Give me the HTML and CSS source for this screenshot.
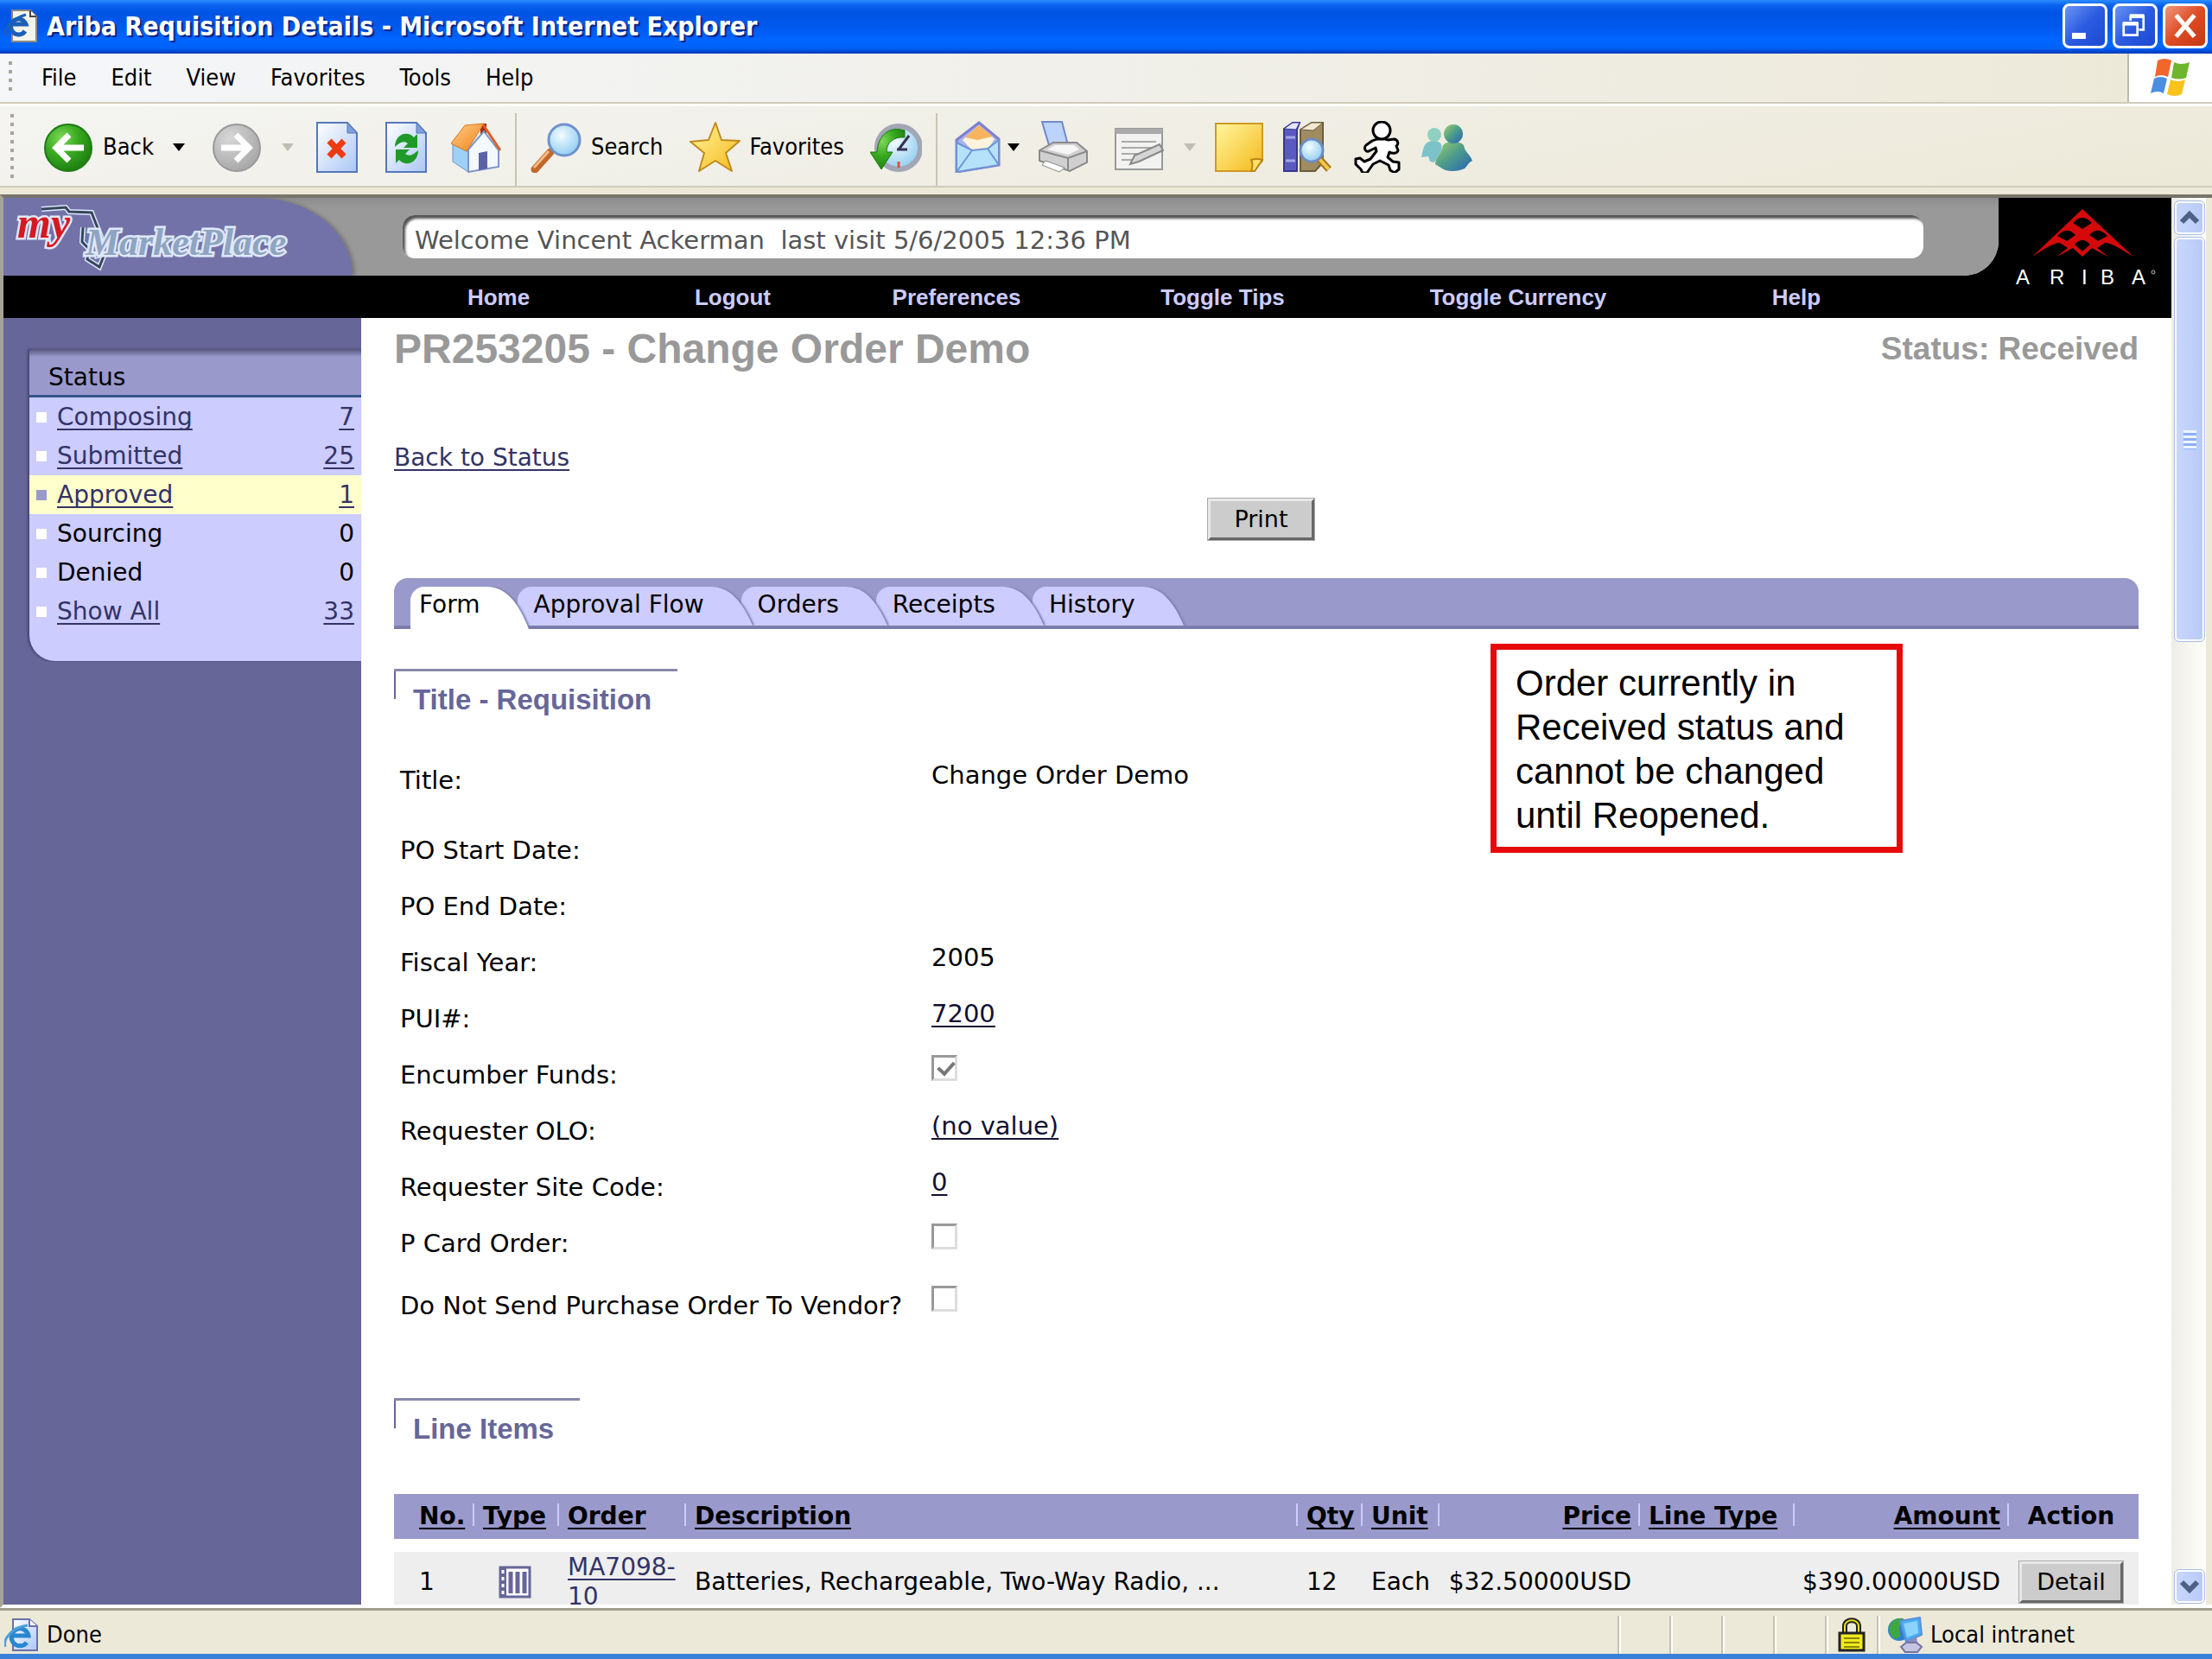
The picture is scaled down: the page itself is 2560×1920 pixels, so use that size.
FILE: index.html
```html
<!DOCTYPE html>
<html lang="en">

<head>
    <meta charset="UTF-8">
    <meta name="viewport" content="width=device-width, initial-scale=1.0">
    <title>Ariba Requisition Details</title>
    <link rel="stylesheet" href="styles.css">
</head>

<body>
    <!-- shared gradients for the icons -->
    <svg class="defs" width="0" height="0" aria-hidden="true">
        <defs>
            <radialGradient id="green" cx="35%" cy="30%" r="75%">
                <stop offset="0" stop-color="#7ed957"/>
                <stop offset="0.5" stop-color="#37a81f"/>
                <stop offset="1" stop-color="#1c7d10"/>
            </radialGradient>
            <radialGradient id="grey" cx="35%" cy="30%" r="75%">
                <stop offset="0" stop-color="#d8d8d8"/>
                <stop offset="1" stop-color="#a6a6a6"/>
            </radialGradient>
            <linearGradient id="paper" x1="0" y1="0" x2="1" y2="1">
                <stop offset="0" stop-color="#ffffff"/>
                <stop offset="1" stop-color="#aac6f5"/>
            </linearGradient>
            <linearGradient id="gold" x1="0" y1="0" x2="1" y2="1">
                <stop offset="0" stop-color="#fff7a0"/>
                <stop offset="1" stop-color="#f5b81a"/>
            </linearGradient>
            <linearGradient id="orange" x1="0" y1="0" x2="1" y2="1">
                <stop offset="0" stop-color="#ffcf8a"/>
                <stop offset="1" stop-color="#f08018"/>
            </linearGradient>
            <radialGradient id="glass" cx="40%" cy="35%" r="70%">
                <stop offset="0" stop-color="#f2fcff"/>
                <stop offset="1" stop-color="#8ecbf0"/>
            </radialGradient>
            <linearGradient id="buddy" x1="0" y1="0" x2="1" y2="1">
                <stop offset="0" stop-color="#9ed06a"/>
                <stop offset="0.5" stop-color="#4a9a8c"/>
                <stop offset="1" stop-color="#2a62b8"/>
            </linearGradient>
        </defs>
    </svg>

    <div class="window">
        <header class="titlebar">
            <svg class="title-icon" viewBox="0 0 40 40">
                <path d="M10 2h21l7 7v29H10z" fill="#f4f4ea" stroke="#8a8a80" stroke-width="2"/>
                <path d="M31 2v7h7" fill="#fff" stroke="#444" stroke-width="2"/>
                <path d="M25 26a9 9 0 1 1 1-8H8" fill="none" stroke="#1c5fb8" stroke-width="5"/>
                <path d="M2 31C0 22 12 11 26 7" fill="none" stroke="#1c5fb8" stroke-width="3"/>
            </svg>
            <h1 class="window-title">Ariba Requisition Details - Microsoft Internet Explorer</h1>
            <div class="window-buttons">
                <button class="win-btn" aria-label="Minimize">
                    <svg viewBox="0 0 52 52"><path d="M9 35h18v8H9z" fill="#fff"/></svg>
                </button>
                <button class="win-btn" aria-label="Restore">
                    <svg viewBox="0 0 52 52" fill="none" stroke="#fff" stroke-width="3">
                        <path d="M20 19v-5h17v17h-6"/><path d="M19 13h19" stroke-width="5"/>
                        <path d="M11 23h18v15H11z"/><path d="M10 23h20" stroke-width="5"/>
                    </svg>
                </button>
                <button class="win-btn close" aria-label="Close">
                    <svg viewBox="0 0 52 52"><path d="M14 12l24 28M38 12L14 40" stroke="#fff" stroke-width="6"/></svg>
                </button>
            </div>
        </header>

        <nav class="menubar">
            <span class="grip"></span>
            <button>File</button>
            <button>Edit</button>
            <button>View</button>
            <button>Favorites</button>
            <button>Tools</button>
            <button>Help</button>
            <div class="throbber">
                <svg viewBox="0 0 50 46">
                    <path d="M10 3q8-4 16 0l-4 19q-8-4-15 0z" fill="#f0662c"/>
                    <path d="M29 5q8 4 18 0l-4 18q-8 3-17 0z" fill="#6cb52d"/>
                    <path d="M6 24q7-4 15 0l-4 17q-7-4-15 0z" fill="#4a8fe0"/>
                    <path d="M25 25q8 4 17 0l-4 17q-8 4-17 0z" fill="#fbc21c"/>
                </svg>
            </div>
        </nav>

        <div class="toolbar">
            <span class="grip"></span>
            <button class="tool labelled">
                <svg viewBox="0 0 60 60">
                    <circle cx="30" cy="31" r="27" fill="url(#green)" stroke="#1f7a14" stroke-width="2"/>
                    <path d="M48 31H18M31 16L16 31l15 15" fill="none" stroke="#fff" stroke-width="7"/>
                </svg>
                Back
                <i class="arrow"></i>
            </button>
            <button class="tool" disabled aria-label="Forward">
                <svg viewBox="0 0 60 60">
                    <circle cx="30" cy="31" r="27" fill="url(#grey)" stroke="#999" stroke-width="2"/>
                    <path d="M12 31h30M29 16l15 15-15 15" fill="none" stroke="#fff" stroke-width="7"/>
                </svg>
                <i class="arrow"></i>
            </button>
            <button class="tool" aria-label="Stop">
                <svg viewBox="0 0 60 60">
                    <path d="M7 2h35l11 12v45H7z" fill="url(#paper)" stroke="#5577bb" stroke-width="2"/>
                    <path d="M42 2v12h11z" fill="#7e9fdc" stroke="#5577bb"/>
                    <path d="M21 23l17 18M38 23L21 41" stroke="#ee3a12" stroke-width="7"/>
                </svg>
            </button>
            <button class="tool" aria-label="Refresh">
                <svg viewBox="0 0 60 60">
                    <path d="M7 2h35l11 12v45H7z" fill="url(#paper)" stroke="#5577bb" stroke-width="2"/>
                    <path d="M42 2v12h11z" fill="#7e9fdc" stroke="#5577bb"/>
                    <path d="M17 30c0-14 14-20 22-11l4-4v16H27l5-5c-6-4-10 0-15 4z" fill="#1f9a28"/>
                    <path d="M44 34c0 14-14 20-22 11l-4 4V33h16l-5 5c6 4 10 0 15-4z" fill="#1f9a28"/>
                </svg>
            </button>
            <button class="tool" aria-label="Home">
                <svg viewBox="0 0 60 60">
                    <path d="M36 3h7v14h-7z" fill="#a32a14"/>
                    <path d="M4 27l18 9v23L4 47z" fill="#9fd0f5" stroke="#6d95c8"/>
                    <path d="M22 33L40 12l17 22v19L22 59z" fill="#f4f8ff" stroke="#7b96c8" stroke-width="2"/>
                    <path d="M34 37l10-2v20l-10 2z" fill="#5c62a8"/>
                    <path d="M2 26L18 5l22-2-20 32z" fill="url(#orange)" stroke="#d9791e"/>
                    <path d="M39 4l20 30" stroke="#d9612a" stroke-width="3"/>
                </svg>
            </button>
            <span class="separator"></span>
            <button class="tool labelled">
                <svg viewBox="0 0 60 60">
                    <path d="M5 56l18-20" stroke="#c0692a" stroke-width="9" stroke-linecap="round"/>
                    <path d="M4 54l17-19" stroke="#f5b988" stroke-width="3"/>
                    <circle cx="39" cy="22" r="18" fill="url(#glass)" stroke="#6f92cf" stroke-width="3"/>
                </svg>
                Search
            </button>
            <button class="tool labelled">
                <svg viewBox="0 0 60 60">
                    <path d="M31 2l7 20 21 1-16 14 7 21-19-12-19 12 6-21L2 24l21-2z" fill="url(#gold)" stroke="#c08a1c" stroke-width="2" stroke-linejoin="round"/>
                </svg>
                Favorites
            </button>
            <button class="tool" aria-label="History">
                <svg viewBox="0 0 60 60">
                    <circle cx="33" cy="31" r="25" fill="url(#glass)" stroke="#a3a6b4" stroke-width="6"/>
                    <path d="M33 33L45 17M31 33h12" stroke="#335" stroke-width="3"/>
                    <path d="M33 47v7" stroke="#e05030" stroke-width="3"/>
                    <path d="M40 11C22 5 9 17 8 36H0l13 20 13-20h-7c0-11 8-18 21-17z" fill="url(#green)" stroke="#1f7a14"/>
                </svg>
            </button>
            <span class="separator"></span>
            <button class="tool mail" aria-label="Mail">
                <svg viewBox="0 0 60 60">
                    <path d="M6 22L32 2l23 19v30L6 59z" fill="#a9b4ec" stroke="#7f7fd0" stroke-width="3"/>
                    <path d="M13 22L32 5l18 16-8 12-17 2z" fill="#fff3dd"/>
                    <path d="M16 19L32 5l16 13-18 4z" fill="#f6b45e"/>
                    <path d="M6 25l18 9 18-2 13-10v29L6 59z" fill="#b5e2fa" stroke="#6f93d8" stroke-width="2"/>
                    <path d="M6 59l18-25M55 51L42 32" stroke="#6f93d8" stroke-width="2"/>
                </svg>
                <i class="arrow"></i>
            </button>
            <button class="tool print" aria-label="Print page">
                <svg viewBox="0 0 60 60">
                    <path d="M6 1h23l7 27H14z" fill="#bcd3fb" stroke="#7288c8" stroke-width="2"/>
                    <path d="M3 34l16-9h27l12 10v13L38 58 3 46z" fill="#d0d0d0" stroke="#8a8a8a" stroke-width="2"/>
                    <path d="M3 34l33 9 22-8M36 43v14" fill="none" stroke="#8a8a8a" stroke-width="2"/>
                    <path d="M12 33l9-5h22l6 5-13 6z" fill="#f6f6f6"/>
                    <path d="M10 46l22 8-6 5-20-8z" fill="#fff" stroke="#888"/>
                </svg>
            </button>
            <button class="tool" disabled aria-label="Edit">
                <svg viewBox="0 0 60 60">
                    <path d="M3 9h54v47H3z" fill="#f2f2f0" stroke="#999" stroke-width="2"/>
                    <path d="M3 9h54v6H3z" fill="#aaa"/>
                    <path d="M10 24h40M10 31h38M10 38h22M10 45h14" stroke="#aaa" stroke-width="2"/>
                    <path d="M20 50l5-10 29-13 4 7-28 13z" fill="#d5d5d5" stroke="#888" stroke-width="2"/>
                </svg>
                <i class="arrow"></i>
            </button>
            <button class="tool" aria-label="Notes">
                <svg viewBox="0 0 60 60">
                    <path d="M3 3h54v43L47 58H3z" fill="url(#gold)" stroke="#cf9a22" stroke-width="2"/>
                    <path d="M57 45c-6-2-10-1-13 0 2 4 2 8 0 13h4z" fill="#ffe36a" stroke="#b98412" stroke-width="2"/>
                </svg>
            </button>
            <button class="tool" aria-label="Research">
                <svg viewBox="0 0 60 60">
                    <path d="M2 9L12 2h8l-3 8v48H2z" fill="#5a5ac0" stroke="#38388c" stroke-width="2"/>
                    <path d="M2 9L12 2h8l-4 8z" fill="#e6e6fa" stroke="#38388c"/>
                    <path d="M4 19h11M4 46h11" stroke="#a6a6e8" stroke-width="3"/>
                    <path d="M21 10l13-8h13v46l-9 10H21z" fill="#a08c60" stroke="#6c5c38" stroke-width="2"/>
                    <path d="M21 10l13-8h13L36 11z" fill="#f1ead2" stroke="#6c5c38"/>
                    <path d="M42 43l12 13" stroke="#a8761c" stroke-width="8"/>
                    <path d="M42 43l12 13" stroke="#f2c94c" stroke-width="4"/>
                    <circle cx="34" cy="34" r="13" fill="url(#glass)" stroke="#6c8cc4" stroke-width="3"/>
                </svg>
            </button>
            <button class="tool" aria-label="AIM">
                <svg viewBox="0 0 60 60" fill="#fff" stroke="#000" stroke-width="3" stroke-linejoin="round">
                    <path d="M24 23C30 20 38 20 42 22L50 21C54 22 55 27 52 29L54 34C53 38 47 38 44 36L42 42L48 47L55 48V56L50 60L45 57L43 51L33 46L25 50L18 60H13L11 56L5 50V44L10 43L15 47L22 44L29 35L28 31L20 35C16 36 14 31 17 28Z"/>
                    <circle cx="35" cy="11" r="10"/>
                </svg>
            </button>
            <button class="tool" aria-label="Messenger">
                <svg viewBox="0 0 60 60">
                    <path d="M1 42c3-13 3-18 14-19 8 0 11 4 9 12l-8 13-5-1-2-6z" fill="#7cc3c9"/>
                    <circle cx="16" cy="16" r="8" fill="#8fd0c0"/>
                    <path d="M17 50c0-8 8-12 9-22 6-6 18-6 24 0 1 8 7 10 10 18-5 2-6 7-9 9-8 4-21 4-26 0z" fill="url(#buddy)"/>
                    <circle cx="38" cy="15" r="11" fill="url(#buddy)"/>
                </svg>
            </button>
        </div>

        <div class="viewport">
            <main class="page">
                <div class="banner">
                    <div class="brand">
                        <svg class="market-logo" viewBox="0 0 404 90">
                            <path d="M44 13l28-2 4 5 26 1 11 28-4 22 8-2-6 15-14-9 2-12-8-8 1-17" fill="none" stroke="#e0e8fa" stroke-width="6"/>
                            <path d="M44 13l28-2 4 5 26 1 11 28-4 22 8-2-6 15-14-9 2-12-8-8 1-17" fill="none" stroke="#34465c" stroke-width="3"/>
                            <text class="logo-market" x="95" y="66">MarketPlace</text>
                            <text class="logo-my" x="16" y="46">my</text>
                        </svg>
                    </div>
                    <div class="welcome">Welcome Vincent Ackerman&nbsp; last visit 5/6/2005 12:36 PM</div>
                </div>
                <div class="ariba">
                    <svg viewBox="0 0 174 110">
                        <path d="M78 9L20 64C34 55 44 48 52 48L61 54L48 64C57 60 63 56 67 54L78 64L89 54C93 56 99 60 108 64L95 54L104 48C112 48 122 55 137 64Z" fill="#d40a0a"/>
                        <path d="M67 25Q78 13 89 25L78 32ZM49 40Q60 28 70 39L60 46ZM86 39Q96 28 107 40L96 46ZM69 50Q78 40 87 50L78 58Z" fill="#000"/>
                        <text class="ariba-name" x="1 40 77 99 135" y="96">ARIBA</text>
                        <circle cx="160" cy="82" r="2" fill="none" stroke="#bbb"/>
                    </svg>
                </div>
                <nav class="site-nav">
                    <a href="#">Home</a>
                    <a href="#">Logout</a>
                    <a href="#">Preferences</a>
                    <a href="#">Toggle Tips</a>
                    <a href="#">Toggle Currency</a>
                    <a href="#">Help</a>
                </nav>

                <aside class="sidebar">
                    <section class="status-panel">
                        <h2>Status</h2>
                        <ul>
                            <li><a href="#">Composing</a><a href="#">7</a></li>
                            <li><a href="#">Submitted</a><a href="#">25</a></li>
                            <li class="current"><a href="#">Approved</a><a href="#">1</a></li>
                            <li><span>Sourcing</span><span>0</span></li>
                            <li><span>Denied</span><span>0</span></li>
                            <li><a href="#">Show All</a><a href="#">33</a></li>
                        </ul>
                    </section>
                </aside>

                <div class="content">
                    <div class="heading">
                        <h2>PR253205 - Change Order Demo</h2>
                        <span class="state">Status: Received</span>
                    </div>
                    <a class="back-link" href="#">Back to Status</a>
                    <div class="actions">
                        <button class="grey-btn">Print</button>
                    </div>

                    <div class="tabs">
                        <a class="tab active" href="#"><span>Form</span><svg viewBox="0 0 50 50" preserveAspectRatio="none"><path d="M0 0C24 0 38 20 50 50H0z"/></svg></a>
                        <a class="tab" href="#"><span>Approval Flow</span><svg viewBox="0 0 50 50" preserveAspectRatio="none"><path d="M0 0C24 0 38 20 50 50H0z"/></svg></a>
                        <a class="tab" href="#"><span>Orders</span><svg viewBox="0 0 50 50" preserveAspectRatio="none"><path d="M0 0C24 0 38 20 50 50H0z"/></svg></a>
                        <a class="tab" href="#"><span>Receipts</span><svg viewBox="0 0 50 50" preserveAspectRatio="none"><path d="M0 0C24 0 38 20 50 50H0z"/></svg></a>
                        <a class="tab" href="#"><span>History</span><svg viewBox="0 0 50 50" preserveAspectRatio="none"><path d="M0 0C24 0 38 20 50 50H0z"/></svg></a>
                    </div>

                    <h3 class="section-title">Title - Requisition</h3>
                    <table class="fields">
                        <tr class="tall"><th>Title:</th><td>Change Order Demo</td></tr>
                        <tr><th>PO Start Date:</th><td></td></tr>
                        <tr><th>PO End Date:</th><td></td></tr>
                        <tr><th>Fiscal Year:</th><td>2005</td></tr>
                        <tr><th>PUI#:</th><td><a href="#">7200</a></td></tr>
                        <tr><th><label for="encumber">Encumber Funds:</label></th><td><input type="checkbox" id="encumber" checked disabled></td></tr>
                        <tr><th>Requester OLO:</th><td><a href="#">(no value)</a></td></tr>
                        <tr><th>Requester Site Code:</th><td><a href="#">0</a></td></tr>
                        <tr class="card-row"><th><label for="pcard">P Card Order:</label></th><td><input type="checkbox" id="pcard" disabled></td></tr>
                        <tr><th><label for="nosend">Do Not Send Purchase Order To Vendor?</label></th><td><input type="checkbox" id="nosend" disabled></td></tr>
                    </table>

                    <h3 class="section-title line-title">Line Items</h3>
                    <table class="items">
                        <colgroup>
                            <col class="c-no"><col class="c-type"><col class="c-order"><col>
                            <col class="c-qty"><col class="c-unit"><col class="c-price">
                            <col class="c-line"><col class="c-amount"><col class="c-action">
                        </colgroup>
                        <thead>
                            <tr>
                                <th><a href="#">No.</a></th>
                                <th><a href="#">Type</a></th>
                                <th><a href="#">Order</a></th>
                                <th><a href="#">Description</a></th>
                                <th><a href="#">Qty</a></th>
                                <th><a href="#">Unit</a></th>
                                <th class="num"><a href="#">Price</a></th>
                                <th><a href="#">Line Type</a></th>
                                <th class="num"><a href="#">Amount</a></th>
                                <th class="action">Action</th>
                            </tr>
                        </thead>
                        <tbody>
                            <tr>
                                <td>1</td>
                                <td class="type">
                                    <svg viewBox="0 0 38 38">
                                        <path d="M2 2h34v34H2z" fill="#fff" stroke="#666699" stroke-width="3"/>
                                        <path d="M2 2h7v34H2z" fill="#666699"/>
                                        <path d="M5 5v29" stroke="#fff" stroke-width="3" stroke-dasharray="4 4"/>
                                        <path d="M14 7v25M22 7v25M30 7v25" stroke="#666699" stroke-width="5"/>
                                    </svg>
                                </td>
                                <td><a href="#">MA7098-<br>10</a></td>
                                <td>Batteries, Rechargeable, Two-Way Radio, ...</td>
                                <td>12</td>
                                <td>Each</td>
                                <td class="num">$32.50000USD</td>
                                <td></td>
                                <td class="num">$390.00000USD</td>
                                <td class="action"><button class="grey-btn">Detail</button></td>
                            </tr>
                        </tbody>
                    </table>

                    <div class="note">Order currently in Received status and cannot be changed until Reopened.</div>
                </div>
            </main>

            <div class="scrollbar">
                <button class="scroll-btn" aria-label="Scroll up">
                    <svg viewBox="0 0 24 24"><path d="M3 17l9-9 9 9" fill="none" stroke="#4d6185" stroke-width="6"/></svg>
                </button>
                <div class="thumb"><i></i></div>
                <button class="scroll-btn down" aria-label="Scroll down">
                    <svg viewBox="0 0 24 24"><path d="M3 7l9 9 9-9" fill="none" stroke="#4d6185" stroke-width="6"/></svg>
                </button>
            </div>
        </div>

        <footer class="statusbar">
            <svg class="done-icon" viewBox="0 0 40 40">
                <path d="M10 2h19l9 8v28H10z" fill="url(#paper)" stroke="#6a70a8" stroke-width="2"/>
                <path d="M29 2v8h9" fill="#fff" stroke="#6a70a8" stroke-width="2"/>
                <path d="M26 29a10 10 0 1 1 2-8H10" fill="none" stroke="#2a86cf" stroke-width="5"/>
                <path d="M1 34C-2 24 10 11 27 9" fill="none" stroke="#4aa0dd" stroke-width="3"/>
            </svg>
            <span class="done">Done</span>
            <span class="cell"></span>
            <span class="cell"></span>
            <span class="cell"></span>
            <span class="cell"></span>
            <span class="cell lock">
                <svg viewBox="0 0 32 40">
                    <path d="M8 18v-8c0-9 16-9 16 0v8" fill="none" stroke="#222" stroke-width="6"/>
                    <path d="M8 18v-8c0-9 16-9 16 0v8" fill="none" stroke="#e8e020" stroke-width="2"/>
                    <path d="M2 18h28v20H2z" fill="#f0ea20" stroke="#222" stroke-width="3"/>
                    <path d="M7 24h18M7 29h18M7 34h18" stroke="#8a8600" stroke-width="2"/>
                </svg>
            </span>
            <span class="cell zone">
                <svg viewBox="0 0 42 42">
                    <circle cx="14" cy="15" r="13" fill="#2f7fd0"/>
                    <path d="M2 12c4-9 10-11 17-10l-5 9 1 12-6 3c-5-4-7-8-7-14z" fill="#3fa645"/>
                    <path d="M15 5l23-4 2 20-18 8z" fill="#4aaef4" stroke="#5b8fd8" stroke-width="2"/>
                    <path d="M19 8l16-3 1 14-13 5z" fill="#8ad4ff"/>
                    <path d="M25 27l9-3 1 6-8 3z" fill="#8c8cc0"/>
                    <path d="M16 35l6-5h12l6 5-5 6H21z" fill="#c4c4e2" stroke="#7474a4" stroke-width="2"/>
                </svg>
                Local intranet
            </span>
        </footer>
    </div>
</body>

</html>
```

FILE: styles.css
```css
* {
    box-sizing: border-box;
}

body {
    margin: 0;
    font-family: "DejaVu Sans", Verdana, sans-serif;
    font-size: 28px;
    line-height: 34px;
    color: #000;
}

h1, h2, h3, ul {
    margin: 0;
    padding: 0;
}

a {
    color: #333366;
    text-decoration-thickness: 2px;
    text-underline-offset: 4px;
    text-decoration-skip-ink: none;
}

button {
    font: inherit;
    color: inherit;
    padding: 0;
    border: none;
    background: none;
}

svg {
    display: block;
}

.defs {
    position: absolute;
}

.window {
    display: flex;
    flex-direction: column;
    height: 100vh;
    overflow: hidden;
    background: #ece9d8;
    border-bottom: 6px solid #3a80d8;
}

/* title bar */

.titlebar {
    display: flex;
    align-items: center;
    height: 62px;
    flex: none;
    padding: 0 5px 2px 4px;
    background: linear-gradient(#2a8cff 0, #0a62ee 10%, #0054e3 25%, #0058ee 50%, #0066ff 75%, #0062f8 90%, #0038b8 100%);
}

.title-icon {
    width: 40px;
    height: 40px;
}

.window-title {
    flex: 1;
    padding: 2px 0 0 10px;
    font: bold 30px/40px "DejaVu Sans Condensed", Tahoma, sans-serif;
    color: #fff;
    text-shadow: 2px 2px 1px #0a1f80;
}

.window-buttons {
    display: flex;
    gap: 6px;
}

.win-btn {
    width: 52px;
    height: 52px;
    border: 3px solid #fff;
    border-radius: 8px;
    background: linear-gradient(135deg, #6c94f4, #2a5be0 50%, #1c4ad0);
}

.win-btn svg {
    width: 46px;
    height: 46px;
}

.win-btn.close {
    background: linear-gradient(135deg, #f0977a, #de4a24 50%, #c23a14);
}

/* menu and toolbar */

.menubar,
.toolbar,
.statusbar {
    font-family: "DejaVu Sans Condensed", Tahoma, sans-serif;
    font-size: 27px;
}

.menubar {
    display: flex;
    align-items: center;
    gap: 40px;
    height: 58px;
    flex: none;
    padding-left: 10px;
    background: linear-gradient(90deg, #f5f6fa, #ece9d8);
    border-bottom: 2px solid #cfccbb;
}

.grip {
    width: 4px;
    height: 38px;
    background: repeating-linear-gradient(#a8a69a 0 4px, transparent 4px 10px);
}

.menubar .grip {
    margin-right: -6px;
}

.throbber {
    align-self: stretch;
    display: flex;
    align-items: center;
    justify-content: center;
    width: 98px;
    margin-left: auto;
    background: #fff;
    border-left: 2px solid #bfbcab;
}

.throbber svg {
    width: 50px;
    height: 46px;
}

.toolbar {
    display: flex;
    align-items: center;
    gap: 20px;
    height: 97px;
    flex: none;
    padding: 2px 0 0 12px;
    background: linear-gradient(170deg, #f4f4f2, #ece9d8);
    border-top: 3px solid #fdfdf8;
    border-bottom: 2px solid #cfccbb;
}

.toolbar .grip {
    height: 76px;
    margin-right: 13px;
}

.tool {
    display: flex;
    align-items: center;
}

.tool svg {
    width: 60px;
    height: 60px;
}

.labelled {
    margin-right: 10px;
}

.labelled svg {
    margin-right: 10px;
}

.arrow {
    margin-left: 22px;
    border: 7px solid transparent;
    border-top: 9px solid #000;
    border-bottom: 0;
}

.mail .arrow {
    margin-left: 5px;
}

.tool:disabled .arrow {
    border-top-color: #c0beb2;
}

.print {
    margin-right: 8px;
}

.separator {
    align-self: stretch;
    width: 2px;
    margin: 6px -4px 0;
    background: #c8c5b4;
}

/* viewport */

.viewport {
    flex: 1;
    min-height: 0;
    display: flex;
    margin-top: 8px;
    padding-right: 7px;
    border-top: 4px solid #77756a;
    border-left: 4px solid #a5a396;
    border-bottom: 4px solid #fff;
}

.page {
    flex: 1;
    display: grid;
    grid-template-columns: 414px 1fr 200px;
    grid-template-rows: 90px 49px 1fr;
    overflow: hidden;
    background: #fff;
}

.banner {
    grid-column: 1 / 3;
    display: flex;
    align-items: center;
    padding-right: 87px;
    background: linear-gradient(#8c8c8c, #999 12px);
    border-bottom-right-radius: 40px;
    box-shadow: 40px 0 0 #000;
}

.brand {
    width: 404px;
    height: 90px;
    margin-right: 58px;
    background: #7272a8;
    border-top-right-radius: 110px 90px;
    box-shadow: 3px 0 4px #777;
}

.market-logo {
    width: 404px;
    height: 90px;
}

.logo-market,
.logo-my {
    font-family: "Liberation Serif", serif;
    font-style: italic;
    font-weight: bold;
    paint-order: stroke;
    stroke: #dfe8fa;
    stroke-width: 5px;
}

.logo-market {
    font-size: 44px;
    fill: #8ea4c0;
}

.logo-my {
    font-size: 50px;
    fill: #d81820;
}

.welcome {
    flex: 1;
    height: 50px;
    padding-left: 14px;
    font-size: 29px;
    line-height: 58px;
    color: #555;
    background: #fff;
    border-radius: 14px;
    box-shadow: inset 3px 4px 3px #555;
}

.ariba {
    grid-column: 3;
    grid-row: 1 / 3;
    padding: 4px 0 0 19px;
    background: #000;
}

.ariba svg {
    width: 174px;
    height: 110px;
}

.ariba-name {
    font: 24px "Liberation Sans", Arial, sans-serif;
    fill: #fff;
}

.site-nav {
    grid-column: 1 / 3;
    grid-row: 2;
    display: grid;
    grid-template-columns: 272fr 270fr 248fr 368fr 316fr 328fr;
    align-items: center;
    padding: 0 70px 0 437px;
    background: #000;
    text-align: center;
}

.site-nav a {
    font: bold 26px/34px "Liberation Sans", Arial, sans-serif;
    color: #ccccff;
    text-decoration: none;
}

/* sidebar */

.sidebar {
    padding: 36px 0 0 30px;
    background: #666699;
}

.status-panel {
    background: #ccccff;
    border-bottom-left-radius: 30px;
    padding-bottom: 35px;
    box-shadow: -2px 0 3px #444470;
}

.status-panel h2 {
    height: 56px;
    padding: 8px 0 0 22px;
    font-size: 28px;
    font-weight: normal;
    line-height: 50px;
    background: linear-gradient(#55557c, #9999cc 9px);
    border-bottom: 3px solid #335588;
}

.status-panel ul {
    list-style: none;
}

.status-panel li {
    display: flex;
    align-items: center;
    height: 45px;
    padding: 0 8px;
}

.status-panel li::before {
    content: "";
    width: 12px;
    height: 12px;
    margin-right: 12px;
    background: #fff;
}

.status-panel li.current {
    background: #ffffcc;
}

.status-panel li.current::before {
    background: #9999cc;
}

.status-panel li > :last-child {
    margin-left: auto;
}

/* requisition */

.content {
    grid-column: 2 / 4;
    position: relative;
    min-height: 0;
    padding: 8px 38px 0;
}

.heading {
    display: flex;
    justify-content: space-between;
    align-items: center;
    font-family: "Liberation Sans", Arial, sans-serif;
    font-weight: bold;
    line-height: 56px;
    color: #999;
}

.heading h2 {
    font-size: 48px;
}

.state {
    font-size: 37px;
}

.back-link {
    display: inline-block;
    margin-top: 81px;
}

.grey-btn {
    height: 48px;
    padding: 0 27px;
    font-size: 27px;
    background: #ccc;
    border: 3px solid;
    border-color: #e8e8e8 #666 #666 #e8e8e8;
    outline: 1px solid #aaa;
}

.actions {
    display: flex;
    justify-content: center;
    margin: 30px 0 44px;
    padding-right: 12px;
}

.tabs {
    display: flex;
    height: 59px;
    padding: 10px 0 0 19px;
    background: linear-gradient(#9999cc 55px, #7c7cac 55px);
    border-radius: 16px 16px 0 0;
}

.tab {
    position: relative;
    display: flex;
    height: 45px;
    margin-right: -13px;
    color: #000;
    text-decoration: none;
}

.tab span {
    padding: 0 7px 0 19px;
    line-height: 42px;
    background: #ccccff;
    border-top-left-radius: 16px;
}

.tab svg {
    width: 49px;
    height: 100%;
    fill: #ccccff;
    filter: drop-shadow(2px 0 1px #7c7cac);
    clip-path: inset(0 -4px 0 0);
}

.tab:nth-child(1) { z-index: 5; }
.tab:nth-child(2) { z-index: 4; }
.tab:nth-child(3) { z-index: 3; }
.tab:nth-child(4) { z-index: 2; }

.tab.active {
    height: 49px;
}

.tab.active span {
    padding-left: 10px;
    background: #fff;
}

.tab.active svg {
    fill: #fff;
}

.section-title {
    width: fit-content;
    margin-top: 46px;
    padding: 11px 30px 0 22px;
    border-top: 3px solid #8888aa;
    font: bold 33px/44px "Liberation Sans", Arial, sans-serif;
    color: #666699;
    background: linear-gradient(#666699, #666699) 0 0 / 2px 32px no-repeat;
}

.line-title {
    margin-top: 73px;
}

.fields {
    margin-top: 40px;
    border-collapse: collapse;
    font-size: 29px;
}

.fields tr {
    height: 65px;
}

.fields .tall {
    height: 81px;
}

.fields .card-row {
    height: 72px;
}

.fields th,
.fields td {
    padding: 14px 0 0 7px;
    text-align: left;
    vertical-align: top;
    font-weight: normal;
}

.fields th {
    width: 622px;
}

.fields td {
    padding: 8px 0 0;
}

.fields a {
    color: #111133;
}

.fields input {
    appearance: none;
    display: block;
    width: 30px;
    height: 30px;
    margin: 0;
    border: 3px solid;
    border-color: #999 #ddd #ddd #999;
    background: #fff;
}

.fields input:checked::after {
    content: "";
    display: block;
    width: 8px;
    height: 15px;
    margin: 1px 0 0 8px;
    border: solid #777;
    border-width: 0 4px 4px 0;
    transform: rotate(42deg);
}

.items {
    width: 100%;
    margin-top: 53px;
    table-layout: fixed;
    border-collapse: separate;
    border-spacing: 0;
}

.c-no { width: 93px; }
.c-type { width: 98px; }
.c-order { width: 147px; }
.c-qty { width: 75px; }
.c-unit { width: 89px; }
.c-price { width: 232px; }
.c-line { width: 179px; }
.c-amount { width: 248px; }
.c-action { width: 150px; }

.items th,
.items td {
    padding: 0 0 0 10px;
    text-align: left;
    white-space: nowrap;
}

.items th:first-child,
.items td:first-child {
    padding-left: 29px;
}

.items th {
    height: 52px;
    background: linear-gradient(#ccccff, #ccccff) right 11px / 2px 26px no-repeat #9999cc;
}

.items th:last-child {
    background: #9999cc;
}

.items th a {
    color: #000;
}

.items td {
    height: 84px;
    border-top: 15px solid #fff;
    background: #eee;
}

.items .num {
    padding: 0 10px 0 0;
    text-align: right;
}

.items .action {
    padding: 0 6px 0 0;
    text-align: center;
}

.items .grey-btn {
    width: 120px;
    padding: 0;
}

.type svg {
    width: 38px;
    height: 38px;
    margin-left: 18px;
}

/* callout on top of the form */
.note {
    position: absolute;
    top: 377px;
    right: 311px;
    width: 477px;
    padding: 13px 30px 11px 22px;
    border: 7px solid #e60a0a;
    background: #fff;
    font: 42px/51px "Liberation Sans", Arial, sans-serif;
}

/* scrollbar */

.scrollbar {
    display: flex;
    flex-direction: column;
    gap: 4px;
    width: 40px;
    padding: 4px 2px 2px 4px;
    background: linear-gradient(90deg, #eeede5, #fefefb);
}

.scroll-btn,
.thumb {
    display: flex;
    align-items: center;
    justify-content: center;
    border: 2px solid #fff;
    outline: 1px solid #a8bce8;
    border-radius: 5px;
    background: linear-gradient(90deg, #c8d6fb, #b8cbf8);
}

.scroll-btn {
    height: 38px;
}

.scroll-btn svg {
    width: 24px;
    height: 24px;
}

.thumb {
    height: 467px;
}

.thumb i {
    width: 15px;
    height: 22px;
    background: repeating-linear-gradient(#eef4fe 0 3px, #8cb0f8 3px 6px);
}

.down {
    margin-top: auto;
}

/* status bar */

.statusbar {
    display: flex;
    align-items: center;
    height: 53px;
    flex: none;
    padding: 6px 0 0 5px;
    background: #ece9d8;
    border-top: 3px solid #a09e8e;
}

.done-icon {
    width: 40px;
    height: 40px;
}

.done {
    flex: 1;
    padding-left: 9px;
}

.cell {
    display: flex;
    align-items: center;
    align-self: stretch;
    width: 60px;
    border-left: 2px solid #c6c3b2;
    box-shadow: inset 2px 0 #fff;
}

.lock {
    justify-content: center;
}

.lock svg {
    width: 32px;
    height: 40px;
}

.zone {
    width: 388px;
    gap: 8px;
    padding-left: 10px;
}

.zone svg {
    width: 42px;
    height: 42px;
}
```
